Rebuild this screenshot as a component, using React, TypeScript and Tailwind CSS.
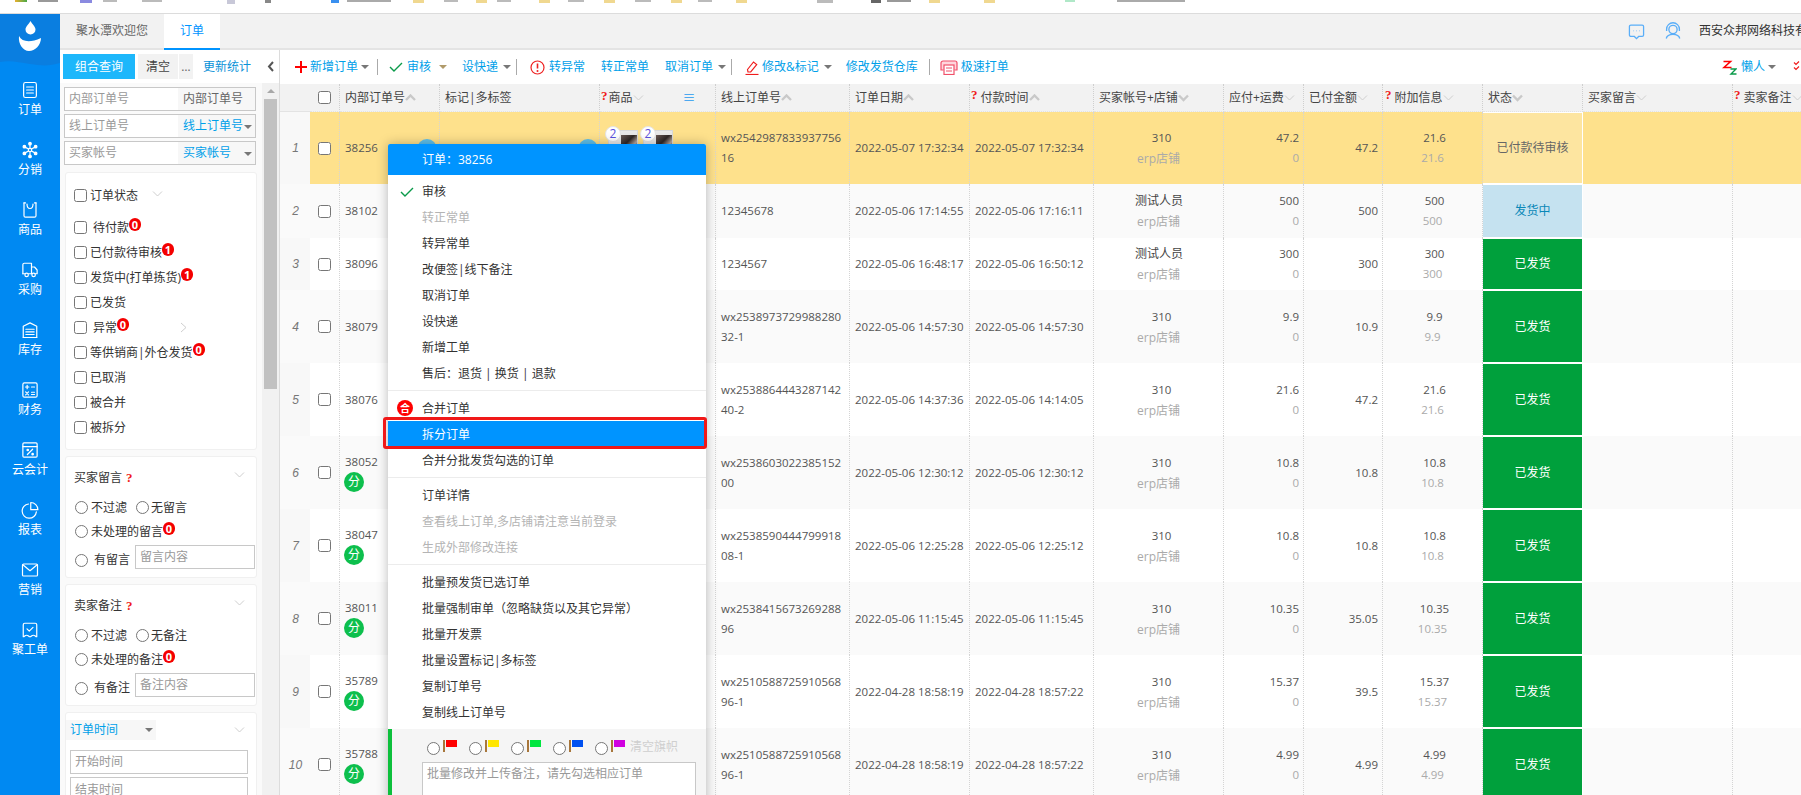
import React from "react";

const Caret = ({ className = "" }: { className?: string }) => (
  <span className={`inline-block w-0 h-0 border-x-[4px] border-x-transparent border-t-[4px] border-t-[#777] ${className}`} />
);

const Chev = ({ dir = "down", bold = false, cls = "" }: { dir?: "down" | "up" | "right"; bold?: boolean; cls?: string }) => {
  const d = dir === "down" ? "M1 1.5 L5.5 6 L10 1.5" : dir === "up" ? "M1 6 L5.5 1.5 L10 6" : "M2 1 L7 5.5 L2 10";
  return (
    <svg width="11" height={dir === "right" ? 11 : 8} viewBox={dir === "right" ? "0 0 11 11" : "0 0 11 8"} className={`inline-block shrink-0 ${cls}`}>
      <path d={d} fill="none" stroke={bold ? "#c9c9c9" : "#cfcfcf"} strokeWidth={bold ? 2.4 : 1} />
    </svg>
  );
};

const Num = ({ n, cls = "" }: { n: number; cls?: string }) => (
  <span className={`inline-flex items-center justify-center w-[12px] h-[13px] rounded-full bg-[#f40000] text-white text-[11px] leading-none font-bold ${cls}`}>{n}</span>
);

const Ask = ({ cls = "" }: { cls?: string }) => (
  <span className={`text-[#f01c1c] text-[13px] leading-none font-bold font-['Liberation_Serif',serif] ${cls}`}>?</span>
);

const S = { fill: "none", stroke: "#fff", strokeWidth: 1.6, strokeLinecap: "round" as const, strokeLinejoin: "round" as const };

const navItems: { label: string; icon: React.ReactNode }[] = [
  { label: "订单", icon: <g {...S}><rect x="3.5" y="2" width="17" height="20" rx="2.5" /><path d="M7.5 8h9M7.5 12h9M7.5 16h9" /></g> },
  { label: "分销", icon: <g {...S}><circle cx="12" cy="12" r="2.3" /><circle cx="12" cy="3.5" r="1.7" fill="#fff" /><circle cx="12" cy="20.5" r="1.7" fill="#fff" /><circle cx="4.5" cy="7.5" r="1.7" fill="#fff" /><circle cx="19.5" cy="7.5" r="1.7" fill="#fff" /><circle cx="4.5" cy="16.5" r="1.7" fill="#fff" /><circle cx="19.5" cy="16.5" r="1.7" fill="#fff" /><path d="M12 5v5M12 14v5M6 8.5l4 2.3M18 8.5l-4 2.3M6 15.5l4-2.3M18 15.5l-4-2.3" /></g> },
  { label: "商品", icon: <g {...S}><path d="M4 2.5v17a2 2 0 0 0 2 2h12a2 2 0 0 0 2-2v-17" /><path d="M4 2.5h2M18 2.5h2" /><path d="M8 4c0 8 8 8 8 0" /></g> },
  { label: "采购", icon: <g {...S}><path d="M2.5 17V5a2 2 0 0 1 2-2h9.5v14" /><path d="M14 8h4l3.5 4v5H19" /><path d="M2.5 17H5M10 17h4" /><circle cx="7.5" cy="18.5" r="2.3" /><circle cx="16.8" cy="18.5" r="2.3" /></g> },
  { label: "库存", icon: <g {...S}><path d="M3 22V7l9-4.5L21 7v15z" /><path d="M6.5 11h11M6.5 14.5h11M6.5 18h11M3 22h18" /></g> },
  { label: "财务", icon: <g {...S}><rect x="2.5" y="2.5" width="19" height="19" rx="2" /><path d="M6 8h4.5M8.2 5.8v4.4M14 8h4M14 15h4M14 18h4M6.2 14.6l3.8 3.8M10 14.6l-3.8 3.8" /></g> },
  { label: "云会计", icon: <g {...S}><rect x="2.5" y="2.5" width="19" height="19" rx="1.5" /><path d="M2.5 7.5h19M15.5 11l-7 7" /><circle cx="9" cy="12" r="1" fill="#fff" /><circle cx="15.5" cy="17.5" r="1" fill="#fff" /></g> },
  { label: "报表", icon: <g {...S}><path d="M10 4a9.5 9.5 0 1 0 10.5 10.5" /><path d="M13 2v9.5h9.5A9.5 9.5 0 0 0 13 2z" /></g> },
  { label: "营销", icon: <g {...S}><rect x="2" y="4" width="20" height="16" rx="1.5" /><path d="M2.5 5l9.5 8 9.5-8" /></g> },
  { label: "聚工单", icon: <g {...S}><path d="M3 5a2 2 0 0 1 2-2h14a2 2 0 0 1 2 2v16c-2 0-2-2-4.5-2s-2.5 2-4.5 2-2-2-4.5-2S5 21 3 21z" /><path d="M8 10.5l3 3 5-5" /></g> },
];

function Sidebar() {
  return (
    <div className="w-[60px] shrink-0 bg-[#0089f2] flex flex-col text-white text-[12px]">
      <svg width="60" height="56" viewBox="0 0 60 56" className="shrink-0">
        <path d="M0 0H60V49C50 52 42 52 30 50C18 48 10 46 0 48Z" fill="#0a7ee0" />
        <path d="M30.5 7C33 11 35.5 13 35.5 15.5A5 5 0 0 1 25.5 15.5C25.5 13 28 11 30.5 7Z" fill="#fff" />
        <path d="M19 22C22 28 30 29 41 24C41 31 35 37 29 37C23 37 18 30 19 22Z" fill="#fff" />
      </svg>
      {navItems.map((n) => (
        <div key={n.label} className="h-[60px] shrink-0 flex flex-col items-center pt-[11px]">
          <svg width="18" height="18" viewBox="0 0 24 24" className="shrink-0">{n.icon}</svg>
          <div className="mt-[3px] leading-[16px]">{n.label}</div>
        </div>
      ))}
    </div>
  );
}

const Check = ({ label, children, sp = false }: { label: string; children?: React.ReactNode; sp?: boolean }) => (
  <label className="h-[25px] flex items-center pl-[8px] text-[12px] text-[#333] relative">
    <input type="checkbox" className="shrink-0" />
    <span className={sp ? "ml-[6px]" : "ml-[3px]"}>{label}</span>
    {children}
  </label>
);

const Field = ({ ph, label, blue, caret }: { ph: string; label: string; blue?: boolean; caret?: boolean }) => (
  <div className="h-[24px] border border-[#c8c8c8] flex items-stretch text-[12px] mb-[3px] bg-white">
    <div className="w-[113px] pl-[4px] flex items-center text-[#999]">{ph}</div>
    <div className={`flex-1 bg-[#f7f7f7] pl-[5px] flex items-center relative ${blue ? "text-[#00a0e9]" : "text-[#666]"}`}>
      {label}
      {caret && <Caret className="absolute right-[3px] top-[10px]" />}
    </div>
  </div>
);

const NoteCard = ({ title, none, pending, has, ph }: { title: string; none: string; pending: string; has: string; ph: string }) => (
  <div className="mt-[6px] h-[122px] bg-white rounded-[3px] border border-[#f0f0f0] pl-[8px] text-[12px] text-[#333] shrink-0">
    <div className="h-[37px] flex items-center pt-[4px] pr-[3px]">
      <span>{title}</span>
      <Ask cls="ml-[4px]" />
      <Chev cls="ml-auto mr-[8px] mb-[6px]" />
    </div>
    <div className="h-[27px] flex items-center">
      <input type="radio" name={title} className="ml-[1px]" />
      <span className="ml-[3px]">不过滤</span>
      <input type="radio" name={title} className="ml-[9px]" />
      <span className="ml-[2px]">{none}</span>
    </div>
    <div className="h-[21px] flex items-center">
      <input type="radio" name={title} className="ml-[1px]" />
      <span className="ml-[3px]">{pending}</span>
      <Num n={0} cls="mb-[6px]" />
    </div>
    <div className="h-[30px] flex items-center">
      <input type="radio" name={title} className="ml-[1px] mt-[6px] shrink-0" />
      <span className="ml-[6px] mt-[6px] whitespace-nowrap">{has}</span>
      <div className="ml-[5px] w-[120px] shrink-0 h-[24px] border border-[#c8c8c8] pl-[4px] flex items-center text-[#999]">{ph}</div>
    </div>
  </div>
);

function LeftPanel() {
  return (
    <div className="w-[220px] shrink-0 border-r border-[#dcdcdc] flex flex-col bg-white overflow-hidden">
      <div className="h-[33px] shrink-0 flex items-center pl-[3px] text-[12px]">
        <div className="w-[72px] h-[25px] bg-[#1db7fb] text-white flex items-center justify-center">组合查询</div>
        <div className="ml-[3px] w-[40px] h-[25px] bg-[#f2f2f2] text-[#444] flex items-center justify-center">清空</div>
        <div className="ml-[1px] w-[14px] h-[25px] bg-[#f2f2f2] text-[#666] flex items-center justify-center">…</div>
        <div className="ml-[10px] text-[#0a92d8]">更新统计</div>
        <svg width="8" height="11" viewBox="0 0 8 11" className="ml-[16px]"><path d="M6 1 L2 5.5 L6 10" fill="none" stroke="#555" strokeWidth="2" /></svg>
      </div>
      <div className="flex flex-1 min-h-0">
        <div className="w-[202px] shrink-0 bg-[#fafafa] flex flex-col pt-[4px] pl-[4px] pr-[5px]">
          <div className="w-[192px]">
            <Field ph="内部订单号" label="内部订单号" />
            <Field ph="线上订单号" label="线上订单号" blue caret />
            <Field ph="买家帐号" label="买家帐号" blue caret />
          </div>
          <div className="mt-[4px] ml-[1px] h-[278px] w-[192px] bg-white rounded-[3px] border border-[#f0f0f0] shrink-0 pt-[10px]">
            <Check label="订单状态"><Chev cls="ml-[14px] mb-[4px]" /></Check>
            <div className="h-[7px]" />
            <Check label="待付款" sp><Num n={0} cls="mb-[6px]" /></Check>
            <Check label="已付款待审核"><Num n={1} cls="mb-[6px]" /></Check>
            <Check label="发货中(打单拣货)"><Num n={1} cls="mb-[6px]" /></Check>
            <Check label="已发货" />
            <Check label="异常" sp><Num n={0} cls="mb-[6px]" /><Chev dir="right" cls="ml-[50px]" /></Check>
            <Check label="等供销商|外仓发货"><Num n={0} cls="mb-[6px]" /></Check>
            <Check label="已取消" />
            <Check label="被合并" />
            <Check label="被拆分" />
          </div>
          <div className="ml-[1px] w-[192px]">
            <NoteCard title="买家留言" none="无留言" pending="未处理的留言" has="有留言" ph="留言内容" />
            <NoteCard title="卖家备注" none="无备注" pending="未处理的备注" has="有备注" ph="备注内容" />
            <div className="mt-[6px] bg-white rounded-[3px] border border-[#f0f0f0] text-[12px] pt-[7px] h-[100px]">
              <div className="flex items-center">
                <div className="w-[90px] h-[20px] bg-[#f7f7f7] pl-[4px] flex items-center text-[#00a0e9] relative">
                  订单时间<Caret className="absolute right-[3px] top-[8px]" />
                </div>
                <Chev cls="ml-auto mr-[11px]" />
              </div>
              <div className="ml-[4px] mt-[10px] w-[178px] h-[24px] border border-[#c8c8c8] pl-[4px] flex items-center text-[#999]">开始时间</div>
              <div className="ml-[4px] mt-[3px] w-[178px] h-[24px] border border-[#c8c8c8] pl-[4px] pt-[2px] text-[#999] leading-[20px]">结束时间</div>
            </div>
          </div>
        </div>
        <div className="w-[17px] shrink-0 bg-[#f1f1f1] flex flex-col items-center">
          <span className="mt-[6px] w-0 h-0 border-x-[4px] border-x-transparent border-b-[4px] border-b-[#a8a8a8]" />
          <div className="mt-[6px] w-[13px] h-[290px] bg-[#c1c1c1]" />
        </div>
      </div>
    </div>
  );
}

const Sep = ({ cls = "" }: { cls?: string }) => <span className={`w-px h-[16px] bg-[#aaa] ${cls}`} />;

function Toolbar() {
  return (
    <div className="h-[34px] shrink-0 bg-white flex items-center text-[12px] text-[#00a0e9] overflow-hidden pl-[15px]">
      <svg width="12" height="12" viewBox="0 0 12 12"><path d="M6 0v12M0 6h12" stroke="#f00" strokeWidth="2" /></svg>
      <span className="ml-[3px]">新增订单</span><Caret className="ml-[3px]" />
      <Sep cls="ml-[8px]" />
      <svg width="14" height="10" viewBox="0 0 14 10" className="ml-[11px]"><path d="M1 5l4 4 8-8" fill="none" stroke="#0a9a4a" strokeWidth="1.4" /></svg>
      <span className="ml-[4px]">审核</span><Caret className="ml-[8px] border-t-[#b09a6a]" />
      <span className="ml-[15px]">设快递</span><Caret className="ml-[5px]" />
      <Sep cls="ml-[5px]" />
      <svg width="15" height="15" viewBox="0 0 15 15" className="ml-[13px]"><circle cx="7.5" cy="7.5" r="6.5" fill="none" stroke="#ee2222" strokeWidth="1.2" /><path d="M7.5 3.5v5" stroke="#ee2222" strokeWidth="1.6" /><circle cx="7.5" cy="11" r="1" fill="#ee2222" /></svg>
      <span className="ml-[4px]">转异常</span>
      <span className="ml-[16px]">转正常单</span>
      <span className="ml-[16px]">取消订单</span><Caret className="ml-[5px]" />
      <Sep cls="ml-[5px]" />
      <svg width="14" height="15" viewBox="0 0 14 15" className="ml-[13px]"><path d="M2.5 9.5L8.5 2l3.2 2.6-6 7.4H3z" fill="none" stroke="#f01c1c" strokeWidth="1.2" /><path d="M0.5 14.5h13" stroke="#f01c1c" strokeWidth="1.2" /></svg>
      <span className="ml-[3px] whitespace-nowrap">修改&amp;标记</span><Caret className="ml-[5px]" />
      <span className="ml-[14px]">修改发货仓库</span>
      <Sep cls="ml-[11px]" />
      <svg width="18" height="15" viewBox="0 0 18 15" className="ml-[10px]"><path d="M3.5 10H1V3a2 2 0 0 1 2-2h12a2 2 0 0 1 2 2v7h-2.5" fill="#ffd6dc" stroke="#f0506a" strokeWidth="1.2" /><rect x="4" y="5" width="10" height="9.5" fill="#fff" stroke="#f0506a" strokeWidth="1.2" /><path d="M6 8h6M6 11h6" stroke="#f0506a" strokeWidth="1" /></svg>
      <span className="ml-[3px]">极速打单</span>
      <svg width="15" height="15" viewBox="0 0 14 15" className="ml-auto"><path d="M1 1.5h7L1.5 7.5H9" fill="none" stroke="#f00" strokeWidth="1.6" /><path d="M8 9h5.5L8.5 14H14" fill="none" stroke="#0a9a4a" strokeWidth="1.4" /></svg>
      <span className="ml-[4px]">懒人</span><Caret className="ml-[3px]" />
      <svg width="10" height="13" viewBox="0 0 10 13" className="ml-[17px] mr-[-2px] shrink-0"><path d="M1 1.5l2 2 3-3M1 6.5l2 2 3-3" fill="none" stroke="#f01c1c" strokeWidth="1.2" /></svg>
    </div>
  );
}

type Row = { id: string; fen?: boolean; online: string; d1: string; d2: string; buyer: string; pay: string; paid: string; add: string; st: string; h: string };

const rows: Row[] = [
  { id: "38256", online: "wx254298783393775616", d1: "2022-05-07 17:32:34", d2: "2022-05-07 17:32:34", buyer: "310", pay: "47.2", paid: "47.2", add: "21.6", st: "已付款待审核", h: "h-[72px]" },
  { id: "38102", online: "12345678", d1: "2022-05-06 17:14:55", d2: "2022-05-06 17:16:11", buyer: "测试人员", pay: "500", paid: "500", add: "500", st: "发货中", h: "h-[54px]" },
  { id: "38096", online: "1234567", d1: "2022-05-06 16:48:17", d2: "2022-05-06 16:50:12", buyer: "测试人员", pay: "300", paid: "300", add: "300", st: "已发货", h: "h-[52px]" },
  { id: "38079", online: "wx253897372998828032-1", d1: "2022-05-06 14:57:30", d2: "2022-05-06 14:57:30", buyer: "310", pay: "9.9", paid: "10.9", add: "9.9", st: "已发货", h: "h-[73px]" },
  { id: "38076", online: "wx253886444328714240-2", d1: "2022-05-06 14:37:36", d2: "2022-05-06 14:14:05", buyer: "310", pay: "21.6", paid: "47.2", add: "21.6", st: "已发货", h: "h-[73px]" },
  { id: "38052", fen: true, online: "wx253860302238515200", d1: "2022-05-06 12:30:12", d2: "2022-05-06 12:30:12", buyer: "310", pay: "10.8", paid: "10.8", add: "10.8", st: "已发货", h: "h-[73px]" },
  { id: "38047", fen: true, online: "wx253859044479991808-1", d1: "2022-05-06 12:25:28", d2: "2022-05-06 12:25:12", buyer: "310", pay: "10.8", paid: "10.8", add: "10.8", st: "已发货", h: "h-[73px]" },
  { id: "38011", fen: true, online: "wx253841567326928896", d1: "2022-05-06 11:15:45", d2: "2022-05-06 11:15:45", buyer: "310", pay: "10.35", paid: "35.05", add: "10.35", st: "已发货", h: "h-[73px]" },
  { id: "35789", fen: true, online: "wx251058872591056896-1", d1: "2022-04-28 18:58:19", d2: "2022-04-28 18:57:22", buyer: "310", pay: "15.37", paid: "39.5", add: "15.37", st: "已发货", h: "h-[73px]" },
  { id: "35788", fen: true, online: "wx251058872591056896-1", d1: "2022-04-28 18:58:19", d2: "2022-04-28 18:57:22", buyer: "310", pay: "4.99", paid: "4.99", add: "4.99", st: "已发货", h: "h-[73px]" },
];

const th = "border-r border-b border-r-[#cfcfcf] border-b-[#e3e3e3] border-dotted font-normal text-left px-[5px] bg-[#f2f2f2] whitespace-nowrap overflow-hidden";
const td = "border-r border-dotted border-r-[#d4d4d4] px-[5px]";

const Thumb = () => (
  <div className="relative w-[30px] h-[20px] border border-[#d8d8d8] bg-[#e8e8e8] flex justify-end">
    <div className="w-[16px] h-[14px] mt-[4px] bg-[linear-gradient(135deg,#6a5a55_0%,#2e2624_45%,#b9aaa3_75%,#3c3230_100%)]" />
    <span className="absolute -left-[4px] -top-[5px] w-[16px] h-[16px] rounded-full bg-white border border-[#e4e4e4] text-[#5a50e0] text-[12px] leading-none flex items-center justify-center">2</span>
  </div>
);

function OrderTable() {
  return (
    <table className="table-fixed border-separate border-spacing-0 w-[1603px] text-[11.5px] text-[#555]">
      <colgroup>
        <col className="w-[30px]" /><col className="w-[30px]" /><col className="w-[100px]" /><col className="w-[160px]" /><col className="w-[116px]" />
        <col className="w-[134px]" /><col className="w-[120px]" /><col className="w-[124px]" /><col className="w-[130px]" /><col className="w-[80px]" />
        <col className="w-[79px]" /><col className="w-[100px]" /><col className="w-[100px]" /><col className="w-[150px]" /><col className="w-[150px]" />
      </colgroup>
      <thead>
        <tr className="h-[28px] text-[12px] text-[#444]">
          <th className="bg-[#f2f2f2] border-b border-b-[#e3e3e3]" />
          <th className={`${th} !px-0`}><div className="flex justify-center pr-[1px]"><input type="checkbox" /></div></th>
          <th className={th}>内部订单号<Chev dir="up" bold /></th>
          <th className={th}>标记|多标签</th>
          <th className={`${th} !pl-[1px]`}>
            <div className="flex items-center"><Ask cls="mb-[5px] mr-[1px]" />商品<Chev /><span className="ml-[39px] text-[#1e9bf0] text-[13px] leading-none">≡</span></div>
          </th>
          <th className={th}>线上订单号<Chev dir="up" bold /></th>
          <th className={th}>订单日期<Chev dir="up" bold /></th>
          <th className={`${th} !pl-[1px]`}><Ask cls="relative -top-[3px] mr-[3px]" />付款时间<Chev dir="up" bold /></th>
          <th className={th}>买家帐号+店铺<Chev bold /></th>
          <th className={th}>应付+运费<Chev /></th>
          <th className={th}>已付金额<Chev /></th>
          <th className={`${th} !pl-[2px]`}><Ask cls="relative -top-[3px] mr-[3px]" />附加信息<Chev /></th>
          <th className={th}>状态<Chev bold /></th>
          <th className={th}>买家留言<Chev /></th>
          <th className={`${th} !pl-[1px]`}><Ask cls="relative -top-[3px] mr-[3px]" />卖家备注<Chev /></th>
        </tr>
      </thead>
      <tbody>
        {rows.map((r, i) => {
          const first = i === 0;
          const bg = first ? "bg-[#fee18c]" : i % 2 === 1 ? "bg-[#fafafa]" : "bg-white";
          const statusCls = first
            ? "bg-[#fde5a0] text-[#666]"
            : r.st === "发货中"
            ? "bg-[#c5e2f0] text-[#0a88b8]"
            : "bg-[#00a03c] text-white";
          return (
            <tr key={i} className={r.h}>
              <td className={`${i % 2 === 1 ? "bg-[#fafafa]" : "bg-[#f8f8f8]"} text-center italic text-[#777] pl-[1px] font-['Liberation_Sans',sans-serif] text-[12px]`}>{i + 1}</td>
              <td className={`${bg} ${td} !px-0 text-center`}><div className="flex justify-center pr-[1px]"><input type="checkbox" /></div></td>
              <td className={`${bg} ${td} relative`}>
                <div className="leading-[18px]">{r.id}</div>
                {r.fen && <div className="mt-[1px] -ml-[1px] w-[20px] h-[20px] rounded-full bg-[#0dbf4d] text-white text-[12px] flex items-center justify-center">分</div>}
                {first && <span className="absolute left-[77px] top-[27px] w-[20px] h-[20px] rounded-full bg-[#5ec0ec]" />}
              </td>
              <td className={`${bg} ${td} relative`}>
                {first && <span className="absolute left-[138px] top-[27px] w-[20px] h-[20px] rounded-full bg-[#5ec0ec]" />}
              </td>
              <td className={`${bg} ${td} align-top !pl-[8px] !pr-0`}>
                {first && <div className="flex gap-[5px] mt-[18px]"><Thumb /><Thumb /></div>}
              </td>
              <td className={`${bg} ${td} break-all leading-[20px]`}>{r.online}</td>
              <td className={`${bg} ${td} whitespace-nowrap`}>{r.d1}</td>
              <td className={`${bg} ${td} whitespace-nowrap`}>{r.d2}</td>
              <td className={`${bg} ${td} text-center leading-[21px]`}>
                <div className={r.buyer === "310" ? "pl-[6px]" : "pl-[1px] text-[12px] text-[#444]"}>{r.buyer}</div>
                <div className="text-[#aaa] text-[12px]">erp店铺</div>
              </td>
              <td className={`${bg} ${td} text-right !pr-[4px] leading-[20px]`}>
                <div>{r.pay}</div><div className="text-[#aaa]">0</div>
              </td>
              <td className={`${bg} ${td} text-right !pr-[4px]`}>{r.paid}</td>
              <td className={`${bg} ${td} text-center leading-[20px]`}>
                <div className="pl-[4px]">{r.add}</div><div className="text-[#aaa]">{r.add}</div>
              </td>
              <td className={`${statusCls} border-y border-r border-solid border-white text-center text-[12px]`}>{r.st}</td>
              <td className={`${bg} ${td}`} />
              <td className={`${bg} ${td}`} />
            </tr>
          );
        })}
      </tbody>
    </table>
  );
}

const MI = ({ t, off, hl, pre }: { t: string; off?: boolean; hl?: boolean; pre?: React.ReactNode }) => (
  <div className={`relative h-[26px] pl-[34px] pt-[1px] flex items-center ${hl ? "bg-[#0094ff] text-white" : off ? "text-[#b4b4b4]" : "text-[#333]"}`}>
    {pre}
    {t}
    {hl && <span className="absolute -left-[5px] -right-[1px] -top-[4px] -bottom-[2px] border-[3px] border-[#f01818] rounded-[3px]" />}
  </div>
);

const Hr = () => <div className="my-[4px] h-px bg-[#ececec]" />;

const Flag = ({ cls }: { cls: string }) => (
  <span className="inline-flex items-start h-[12px] ml-[3px] mb-[5px]">
    <span className="w-[2px] h-[12px] bg-[#a8773c]" />
    <span className={`w-[11px] h-[7px] ml-[1px] ${cls}`} />
  </span>
);

function ContextMenu() {
  return (
    <div className="absolute left-[388px] top-[144px] w-[318px] bg-white rounded-t-[2px] shadow-[0_0_12px_rgba(0,0,0,0.28)] text-[12px] pb-[40px]">
      <div className="h-[31px] bg-[#0094ff] text-white pl-[34px] pt-[1px] flex items-center rounded-t-[2px]">订单：38256</div>
      <div className="h-[3px]" />
      <MI t="审核" pre={<svg width="14" height="10" viewBox="0 0 14 10" className="absolute left-[12px] top-[9px]"><path d="M1 5l4 4 8-8" fill="none" stroke="#0a9a4a" strokeWidth="1.4" /></svg>} />
      <MI t="转正常单" off />
      <MI t="转异常单" />
      <MI t="改便签|线下备注" />
      <MI t="取消订单" />
      <MI t="设快递" />
      <MI t="新增工单" />
      <MI t="售后：退货 | 换货 | 退款" />
      <Hr />
      <MI t="合并订单" pre={<span className="absolute left-[9px] top-[5px] w-[16px] h-[16px] rounded-full bg-[#f00] text-white text-[10px] font-bold flex items-center justify-center">合</span>} />
      <MI t="拆分订单" hl />
      <MI t="合并分批发货勾选的订单" />
      <Hr />
      <MI t="订单详情" />
      <MI t="查看线上订单,多店铺请注意当前登录" off />
      <MI t="生成外部修改连接" off />
      <Hr />
      <MI t="批量预发货已选订单" />
      <MI t="批量强制审单（忽略缺货以及其它异常）" />
      <MI t="批量开发票" />
      <MI t="批量设置标记|多标签" />
      <MI t="复制订单号" />
      <MI t="复制线上订单号" />
      <div className="mt-[4px] h-[80px] bg-[#f5f5f5] border-l-[4px] border-l-[#0dc03c] pl-[30px]">
        <div className="h-[33px] flex items-center pl-[5px] pt-[6px]">
          <input type="radio" name="flag" /><Flag cls="bg-[#f00]" />
          <input type="radio" name="flag" className="ml-[12px]" /><Flag cls="bg-[#ffe600]" />
          <input type="radio" name="flag" className="ml-[12px]" /><Flag cls="bg-[#00e640]" />
          <input type="radio" name="flag" className="ml-[12px]" /><Flag cls="bg-[#0050f0]" />
          <input type="radio" name="flag" className="ml-[12px]" /><Flag cls="bg-[#d000e0]" />
          <span className="ml-[5px] mb-[4px] text-[#cfcfcf]">清空旗帜</span>
        </div>
        <div className="w-[274px] h-[46px] border border-[#c8c8c8] bg-white pl-[4px] pt-[2px] text-[#999]">批量修改并上传备注，请先勾选相应订单</div>
      </div>
    </div>
  );
}

const Bm = ({ cls }: { cls: string }) => <span className={`block shrink-0 ${cls}`} />;

function TopStrip() {
  return (
    <div className="h-[14px] shrink-0 bg-white border-b border-[#dcdcdc] flex items-start overflow-hidden">
      <Bm cls="ml-[15px] w-[12px] h-[2px] bg-[linear-gradient(90deg,#e8b030,#48a848)]" />
      <Bm cls="ml-[11px] w-[20px] h-[2px] bg-[#999]" />
      <Bm cls="ml-[22px] w-[12px] h-[3px] bg-[#8a8ae0]" />
      <Bm cls="ml-[11px] w-[14px] h-[2px] bg-[#bbb]" />
      <Bm cls="ml-[25px] w-[20px] h-[2px] bg-[#bbb]" />
      <Bm cls="ml-[65px] w-[8px] h-[4px] bg-[#c8c8d8]" />
      <Bm cls="ml-[30px] w-[6px] h-[3px] bg-[#888]" />
      <Bm cls="ml-[60px] w-[8px] h-[3px] bg-[#3a90f0]" />
      <Bm cls="ml-[8px] w-[44px] h-[2px] bg-[#aaa]" />
      <Bm cls="ml-[22px] w-[11px] h-[3px] bg-[#f0d890]" />
      <Bm cls="ml-[20px] w-[14px] h-[2px] bg-[#bbb]" />
      <Bm cls="ml-[18px] w-[11px] h-[3px] bg-[#f0d890]" />
      <Bm cls="ml-[10px] w-[14px] h-[2px] bg-[#bbb]" />
      <Bm cls="ml-[28px] w-[11px] h-[3px] bg-[#f0d890]" />
      <Bm cls="ml-[18px] w-[16px] h-[2px] bg-[#bbb]" />
      <Bm cls="ml-[20px] w-[11px] h-[3px] bg-[#f0d890]" />
      <Bm cls="ml-[20px] w-[16px] h-[2px] bg-[#bbb]" />
      <Bm cls="ml-[20px] w-[11px] h-[3px] bg-[#f0d890]" />
      <Bm cls="ml-[16px] w-[14px] h-[2px] bg-[#bbb]" />
      <Bm cls="ml-[24px] w-[11px] h-[3px] bg-[#f0d890]" />
      <Bm cls="ml-[70px] w-[16px] h-[3px] bg-[#bbb]" />
      <Bm cls="ml-[38px] w-[10px] h-[3px] bg-[#666]" />
      <Bm cls="ml-[6px] w-[24px] h-[2px] bg-[#999]" />
      <Bm cls="ml-[18px] w-[11px] h-[3px] bg-[#f0d890]" />
      <Bm cls="ml-[44px] w-[11px] h-[3px] bg-[#f0d890]" />
      <Bm cls="ml-[70px] w-[10px] h-[2px] bg-[#b0e8c8]" />
      <Bm cls="ml-[42px] w-[68px] h-[2px] bg-[#aaa]" />
    </div>
  );
}

function TabBar() {
  return (
    <div className="h-[36px] shrink-0 bg-[#f2f2f2] border-b-2 border-[#e4e4e4] flex text-[12px]">
      <div className="w-[104px] flex items-center justify-center text-[#666]">聚水潭欢迎您</div>
      <div className="w-[56px] -mb-[2px] bg-white border-b-2 border-[#0094ff] text-[#0094ff] flex items-center justify-center">订单</div>
      <div className="ml-auto flex items-center w-[173px] overflow-hidden shrink-0 whitespace-nowrap text-[#333]">
        <svg width="17" height="17" viewBox="0 0 24 24" className="shrink-0" fill="none" stroke="#5aaef8" strokeWidth="1.8"><path d="M4 3h16a2 2 0 0 1 2 2v12a2 2 0 0 1-2 2h-5l-3 3-3-3H4a2 2 0 0 1-2-2V5a2 2 0 0 1 2-2z" /><path d="M8 11h.5M12 11h.5M16 11h.5" strokeWidth="2" /></svg>
        <svg width="18" height="18" viewBox="0 0 24 24" className="shrink-0 ml-[19px]" fill="none" stroke="#5aaef8" strokeWidth="1.8"><circle cx="12" cy="10" r="5.5" /><path d="M3.5 12V9.5a8.5 8.5 0 0 1 17 0V12M3 22c1-4.5 5-5.5 9-5.5s8 1 9 5.5" /></svg>
        <span className="ml-[17px]">西安众邦网络科技有限公司</span>
      </div>
    </div>
  );
}

export default function App() {
  return (
    <div className="relative w-[1801px] h-[795px] overflow-hidden flex flex-col bg-white font-['Open_Sans','Noto_Sans_CJK_SC',sans-serif]">
      <TopStrip />
      <div className="flex flex-1 min-h-0">
        <Sidebar />
        <div className="flex-1 min-w-0 flex flex-col">
          <TabBar />
          <div className="flex flex-1 min-h-0">
            <LeftPanel />
            <div className="flex-1 min-w-0 flex flex-col overflow-hidden">
              <Toolbar />
              <div className="flex-1 min-h-0 overflow-hidden">
                <OrderTable />
              </div>
            </div>
          </div>
        </div>
      </div>
      <ContextMenu />
    </div>
  );
}
